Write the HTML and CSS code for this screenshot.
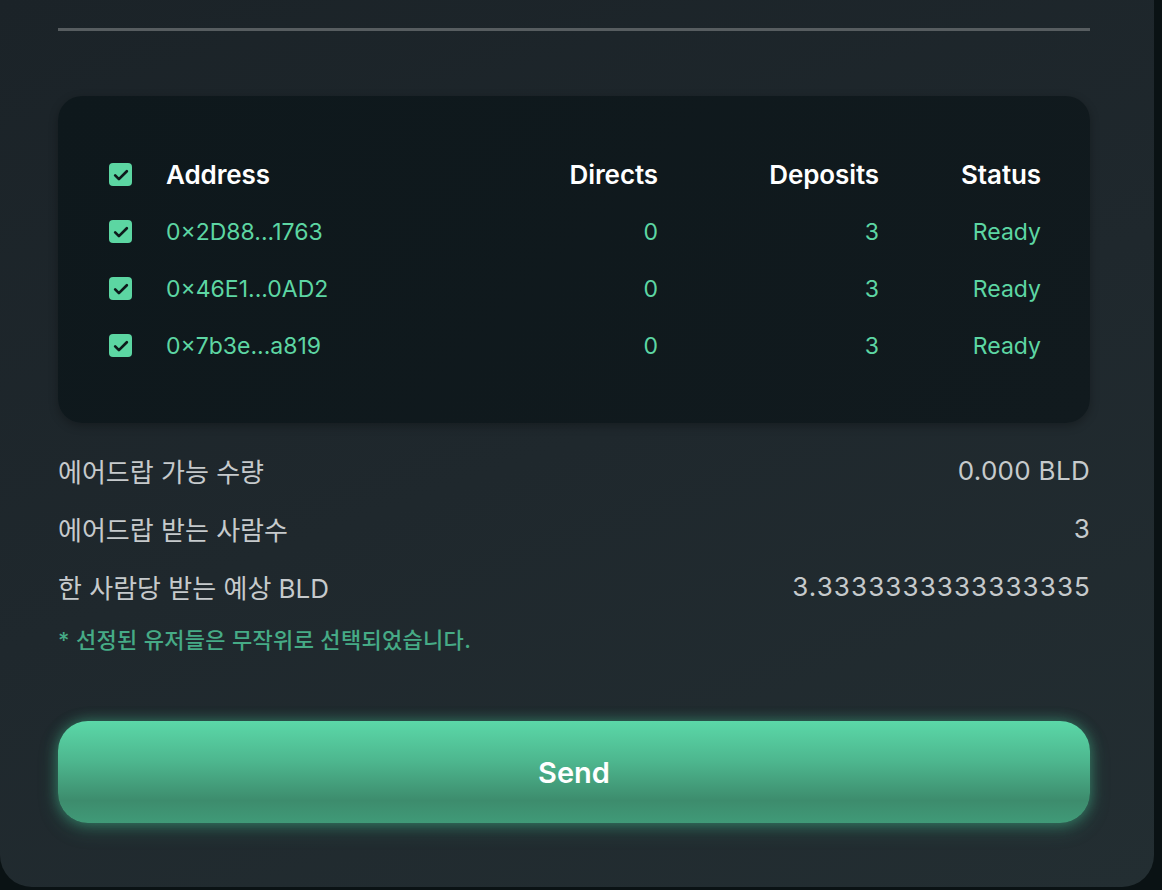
FILE: index.html
```html
<!DOCTYPE html>
<html lang="ko">
<head>
<meta charset="utf-8">
<title>Airdrop</title>
<link rel="stylesheet" href="styles.css">
</head>
<body>
<div class="card">
  <div class="divider"></div>
  <div class="table-box">
    <div class="grid">
      <div class="cell check-cell"><span class="cb"><svg viewBox="0 0 24 24" width="20" height="20"><path d="M5 12.5l4.5 4.5L19 7.5" fill="none" stroke="#0e1a1b" stroke-width="3.2" stroke-linecap="round" stroke-linejoin="round"/></svg></span></div>
      <div class="cell head">Address</div>
      <div class="cell head right">Directs</div>
      <div class="cell head right">Deposits</div>
      <div class="cell head right">Status</div>

      <div class="cell check-cell"><span class="cb"><svg viewBox="0 0 24 24" width="20" height="20"><path d="M5 12.5l4.5 4.5L19 7.5" fill="none" stroke="#0e1a1b" stroke-width="3.2" stroke-linecap="round" stroke-linejoin="round"/></svg></span></div>
      <div class="cell data">0×2D88...1763</div>
      <div class="cell data right">0</div>
      <div class="cell data right">3</div>
      <div class="cell data right">Ready</div>

      <div class="cell check-cell"><span class="cb"><svg viewBox="0 0 24 24" width="20" height="20"><path d="M5 12.5l4.5 4.5L19 7.5" fill="none" stroke="#0e1a1b" stroke-width="3.2" stroke-linecap="round" stroke-linejoin="round"/></svg></span></div>
      <div class="cell data">0×46E1...0AD2</div>
      <div class="cell data right">0</div>
      <div class="cell data right">3</div>
      <div class="cell data right">Ready</div>

      <div class="cell check-cell"><span class="cb"><svg viewBox="0 0 24 24" width="20" height="20"><path d="M5 12.5l4.5 4.5L19 7.5" fill="none" stroke="#0e1a1b" stroke-width="3.2" stroke-linecap="round" stroke-linejoin="round"/></svg></span></div>
      <div class="cell data">0×7b3e...a819</div>
      <div class="cell data right">0</div>
      <div class="cell data right">3</div>
      <div class="cell data right">Ready</div>
    </div>
  </div>

  <div class="summary">
    <div class="sum-row"><span>에어드랍 가능 수량</span><span class="val">0.000 BLD</span></div>
    <div class="sum-row"><span>에어드랍 받는 사람수</span><span class="val">3</span></div>
    <div class="sum-row"><span>한 사람당 받는 예상 BLD</span><span class="val long">3.3333333333333335</span></div>
  </div>
  <p class="note">* 선정된 유저들은 무작위로 선택되었습니다.</p>

  <button class="send">Send</button>
</div>
</body>
</html>
```

FILE: styles.css
```css
html, body {
  margin: 0;
  padding: 0;
}
body {
  background: #0a1214;
  font-family: Inter, "Noto Sans CJK KR", sans-serif;
  width: 1162px;
  height: 890px;
  overflow: hidden;
}
.card {
  box-sizing: border-box;
  width: 1154px;
  height: 887px;
  padding: 28px 64px 0 58px;
  background: linear-gradient(160deg, #1b2328 0%, #1f282d 50%, #232e32 100%);
  border-radius: 0 0 32px 32px;
  display: flex;
  flex-direction: column;
}
.divider {
  height: 3px;
  background: #575d60;
  flex-shrink: 0;
}
.table-box {
  margin-top: 65px;
  background: linear-gradient(135deg, #0e181c, #111a1e);
  border-radius: 24px;
  padding: 50px 49px 49px 51px;
  box-shadow: 0 3px 10px rgba(0, 0, 0, 0.28);
}
.grid {
  display: grid;
  grid-template-columns: 57px 332px 160px 221px 162px;
  grid-auto-rows: 57px;
}
.cell {
  display: flex;
  align-items: center;
}
.right {
  justify-content: flex-end;
}
.head {
  color: #ffffff;
  font-size: 26px;
  font-weight: 600;
  letter-spacing: -0.1px;
}
.data {
  color: #5dd6a3;
  font-size: 23px;
  font-weight: 400;
}
.cb {
  width: 23px;
  height: 23px;
  border-radius: 4px;
  background: #5cd6a2;
  display: flex;
  align-items: center;
  justify-content: center;
}
.summary {
  margin-top: 18px;
  display: flex;
  flex-direction: column;
}
.sum-row {
  height: 58px;
  display: flex;
  justify-content: space-between;
  align-items: center;
  color: #c6cacc;
  font-size: 26px;
}
.val {
  letter-spacing: 0.3px;
}
.val.long {
  letter-spacing: 1.1px;
  margin-right: -1px;
}
.note {
  margin: 10px 0 0 0;
  height: 30px;
  line-height: 30px;
  color: #46ab86;
  font-size: 22px;
  font-weight: 500;
  letter-spacing: 0.3px;
}
.send {
  margin-top: 66px;
  height: 102px;
  border: none;
  border-radius: 30px;
  background: linear-gradient(180deg, #5bd8a8 0%, #4db68e 40%, #3d8c6d 78%, #409a78 100%);
  box-shadow: 0 0 14px rgba(70, 200, 150, 0.45), 0 6px 20px rgba(60, 180, 135, 0.25);
  color: #ffffff;
  font-family: Inter, sans-serif;
  font-size: 29px;
  font-weight: 600;
  cursor: pointer;
}
```
